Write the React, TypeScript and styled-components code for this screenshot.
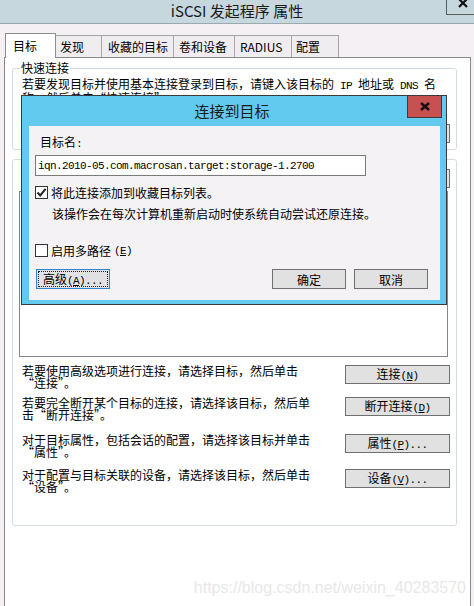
import React from "react";
import styled, { createGlobalStyle } from "styled-components";

const GlobalStyle = createGlobalStyle`
  html, body { margin: 0; padding: 0; }
  body {
    width: 474px;
    height: 606px;
    overflow: hidden;
    background: #f4f0f4;
    font-family: "Noto Sans CJK SC", "Noto Sans", sans-serif;
    font-size: 12px;
    color: #000;
  }
  * { box-sizing: border-box; }
`;

const Window = styled.div`
  position: relative;
  width: 474px;
  height: 606px;
  overflow: hidden;
  background: #f4f0f4;
  display: flex;
  flex-direction: column;
`;

const TitleBar = styled.div`
  flex: none;
  height: 24px;
  background: #c6d7de;
  border-bottom: 1px solid #9aa9b0;
  display: grid;
  grid-template-columns: 1fr auto 1fr;
  align-items: start;
`;

const TitleText = styled.div`
  grid-column: 2;
  font-size: 15px;
  line-height: 22px;
  color: #1a1a1a;
`;

const TitleClose = styled.div`
  grid-column: 3;
  justify-self: end;
  width: 28px;
  height: 15px;
  border-left: 1px solid #5c5c5c;
  border-bottom: 1px solid #5c5c5c;
  padding-left: 11px;
  display: flex;
  align-items: flex-start;
  overflow: hidden;
`;

const Body = styled.div`
  flex: 1;
  display: flex;
  flex-direction: column;
  padding: 9px 3px 0 4px;
`;

const TabStrip = styled.div`
  display: flex;
  align-items: flex-end;
  height: 24px;
  padding-left: 1px;
  position: relative;
  z-index: 2;
`;

const Tab = styled.div<{ $active?: boolean; $w: number; $pl: number }>`
  width: ${(p) => p.$w}px;
  height: ${(p) => (p.$active ? 25 : 22)}px;
  margin-bottom: ${(p) => (p.$active ? -1 : 0)}px;
  padding-left: ${(p) => p.$pl}px;
  display: flex;
  align-items: center;
  white-space: nowrap;
  font-size: 12px;
  line-height: 14px;
  background: ${(p) => (p.$active ? "#ffffff" : "#f0edf0")};
  border-top: 1px solid ${(p) => (p.$active ? "#8c8c8c" : "#a6a6a6")};
  border-right: 1px solid ${(p) => (p.$active ? "#8c8c8c" : "#a6a6a6")};
  border-left: ${(p) => (p.$active ? "1px solid #8c8c8c" : "none")};
`;

const Panel = styled.div`
  flex: 1;
  position: relative;
  z-index: 1;
  background: #ffffff;
  border: 1px solid #898989;
  border-bottom: none;
  padding: 0 13px 0 7px;
  display: flex;
  flex-direction: column;
`;

const GroupBox = styled.div<{ $mt: number; $pt: number; $pb: number }>`
  position: relative;
  margin-top: ${(p) => p.$mt}px;
  padding: ${(p) => p.$pt}px 6px ${(p) => p.$pb}px 6px;
  border: 1px solid #d3dce3;
  border-radius: 3px;
  display: flex;
  flex-direction: column;
`;

const GroupTitle = styled.div`
  position: absolute;
  top: -7px;
  left: 7px;
  padding: 0 1px;
  background: #ffffff;
  line-height: 12px;
  white-space: nowrap;
`;

const HelpText = styled.div`
  padding-left: 3px;
  line-height: 12px;
  white-space: nowrap;
`;

const Ascii = styled.span`
  font-family: "Liberation Mono", "DejaVu Sans Mono", monospace;
  font-size: 11px;
  letter-spacing: -0.6px;
`;

const QuickRow = styled.div`
  margin-top: 20px;
  height: 19px;
  display: flex;
  align-items: center;
  gap: 8px;
  padding-left: 60px;
`;

const FieldBox = styled.div`
  flex: 1;
  height: 19px;
  border: 1px solid #7a7a7a;
  background: #ffffff;
`;

const Button = styled.button`
  flex: none;
  width: 105px;
  height: 19px;
  padding: 0;
  margin: 0;
  border: 1px solid #707070;
  border-radius: 0;
  background: #e1e1e1;
  font-family: "Noto Sans CJK SC", "Noto Sans", sans-serif;
  font-size: 12px;
  line-height: 16px;
  color: #000;
  text-align: center;
  white-space: nowrap;
`;

const RefreshRow = styled.div`
  display: flex;
  justify-content: flex-end;
  height: 19px;
`;

const TargetList = styled.div`
  margin: 3px 2px 0 0;
  height: 166px;
  border: 1px solid #828790;
  background: #ffffff;
`;

const ActionRow = styled.div<{ $mt: number }>`
  margin-top: ${(p) => p.$mt}px;
  display: flex;
  justify-content: space-between;
  align-items: flex-start;
`;

const Dialog = styled.div`
  position: absolute;
  left: 21px;
  top: 95px;
  width: 426px;
  height: 210px;
  z-index: 5;
  border: 1px solid #3a3a3a;
  background: #62c9ef;
  display: flex;
  flex-direction: column;
`;

const DialogTitleBar = styled.div`
  flex: none;
  height: 30px;
  padding-right: 4px;
  display: grid;
  grid-template-columns: 1fr auto 1fr;
  align-items: start;
`;

const DialogTitle = styled.div`
  grid-column: 2;
  font-size: 15px;
  line-height: 30px;
  color: #1a1a1a;
`;

const DialogClose = styled.div`
  grid-column: 3;
  justify-self: end;
  width: 35px;
  height: 22px;
  background: #c75050;
  border: 1px solid #3c3c3c;
  border-top: none;
  display: flex;
  align-items: center;
  justify-content: center;
  padding-bottom: 1px;
`;

const Client = styled.div`
  flex: 1;
  margin: 0 6px 6px 7px;
  background: #f5f2f6;
  padding: 10px 12px 11px 6px;
  display: flex;
  flex-direction: column;
`;

const DialogLabel = styled.div`
  margin-left: 5px;
  line-height: 12px;
  white-space: nowrap;
`;

const NameInput = styled.div`
  margin-top: 5px;
  width: 331px;
  height: 21px;
  border: 1px solid #7a7a7a;
  background: #ffffff;
  padding-left: 2px;
  display: flex;
  align-items: center;
  white-space: nowrap;
  line-height: 12px;
`;

const CheckRow = styled.div<{ $mt: number }>`
  margin-top: ${(p) => p.$mt}px;
  height: 13px;
  display: flex;
  align-items: center;
  gap: 3px;
  line-height: 12px;
  white-space: nowrap;
`;

const CheckBox = styled.div`
  flex: none;
  width: 13px;
  height: 13px;
  border: 1px solid #333333;
  background: #ffffff;
  display: flex;
  align-items: center;
  justify-content: center;
`;

const Desc = styled.div`
  margin-top: 9px;
  padding-left: 17px;
  line-height: 12px;
  white-space: nowrap;
`;

const DialogButtons = styled.div`
  margin-top: 12px;
  padding-left: 1px;
  display: flex;
  gap: 8px;
`;

const DlgButton = styled.button<{ $focus?: boolean; $push?: boolean }>`
  width: 74px;
  height: 20px;
  padding: 0;
  margin: 0;
  margin-left: ${(p) => (p.$push ? "auto" : "0")};
  border: 1px solid ${(p) => (p.$focus ? "#2f86cf" : "#707070")};
  border-radius: 0;
  background: #e1e1e1;
  font-family: "Noto Sans CJK SC", "Noto Sans", sans-serif;
  font-size: 12px;
  line-height: 17px;
  color: #000;
  text-align: center;
  white-space: nowrap;
  outline: ${(p) => (p.$focus ? "1px dotted #222" : "none")};
  outline-offset: -3px;
`;

const Watermark = styled.div`
  position: absolute;
  right: 8px;
  top: 579px;
  z-index: 4;
  font-family: "Liberation Sans", Arial, sans-serif;
  font-size: 16px;
  line-height: 18px;
  color: #e8e8e8;
  white-space: nowrap;
`;

const tabs = [
  { label: "目标", w: 51, pl: 7, active: true },
  { label: "发现", w: 46, pl: 4 },
  { label: "收藏的目标", w: 72, pl: 6 },
  { label: "卷和设备", w: 61, pl: 5 },
  { label: "RADIUS", w: 57, pl: 5 },
  { label: "配置", w: 47, pl: 4 },
];

const XMark = ({ w, h, sw }: { w: number; h: number; sw: number }) => (
  <svg width={w} height={h} viewBox={`0 0 ${w} ${h}`}>
    <path
      d={`M1 1 L${w - 1} ${h - 1} M${w - 1} 1 L1 ${h - 1}`}
      stroke="#111"
      strokeWidth={sw}
      fill="none"
    />
  </svg>
);

export default function App() {
  return (
    <>
      <GlobalStyle />
      <Window>
        <TitleBar>
          <TitleText>iSCSI 发起程序 属性</TitleText>
          <TitleClose>
            <svg width="10" height="9" viewBox="0 0 10 9" style={{ marginTop: -1 }}>
              <path d="M1 0 L9 8 M9 0 L1 8" stroke="#111" strokeWidth="2.2" fill="none" />
            </svg>
          </TitleClose>
        </TitleBar>
        <Body>
          <TabStrip>
            {tabs.map((t) => (
              <Tab key={t.label} $active={t.active} $w={t.w} $pl={t.pl}>
                {t.label}
              </Tab>
            ))}
          </TabStrip>
          <Panel>
            <GroupBox $mt={10} $pt={9} $pb={6}>
              <GroupTitle>快速连接</GroupTitle>
              <HelpText>
                若要发现目标并使用基本连接登录到目标，请键入该目标的<Ascii> IP </Ascii>地址或<Ascii> DNS </Ascii>名
              </HelpText>
              <HelpText>称，然后单击“快速连接”。</HelpText>
              <QuickRow>
                <FieldBox />
                <Button aria-label="快速连接" />
              </QuickRow>
            </GroupBox>
            <GroupBox $mt={9} $pt={9} $pb={32}>
              <RefreshRow>
                <Button aria-label="刷新" />
              </RefreshRow>
              <TargetList />
              <ActionRow $mt={8}>
                <HelpText>
                  若要使用高级选项进行连接，请选择目标，然后单击
                  <br />
                  “连接”。
                </HelpText>
                <Button>
                  连接<Ascii>(<u>N</u>)</Ascii>
                </Button>
              </ActionRow>
              <ActionRow $mt={8}>
                <HelpText>
                  若要完全断开某个目标的连接，请选择该目标，然后单
                  <br />
                  击“断开连接”。
                </HelpText>
                <Button>
                  断开连接<Ascii>(<u>D</u>)</Ascii>
                </Button>
              </ActionRow>
              <ActionRow $mt={13}>
                <HelpText>
                  对于目标属性，包括会话的配置，请选择该目标并单击
                  <br />
                  “属性”。
                </HelpText>
                <Button>
                  属性<Ascii>(<u>P</u>)...</Ascii>
                </Button>
              </ActionRow>
              <ActionRow $mt={11}>
                <HelpText>
                  对于配置与目标关联的设备，请选择该目标，然后单击
                  <br />
                  “设备”。
                </HelpText>
                <Button>
                  设备<Ascii>(<u>V</u>)...</Ascii>
                </Button>
              </ActionRow>
            </GroupBox>
          </Panel>
        </Body>

        <Dialog>
          <DialogTitleBar>
            <DialogTitle>连接到目标</DialogTitle>
            <DialogClose>
              <XMark w={10} h={9} sw={2.4} />
            </DialogClose>
          </DialogTitleBar>
          <Client>
            <DialogLabel>
              目标名<Ascii>:</Ascii>
            </DialogLabel>
            <NameInput>
              <Ascii>iqn.2010-05.com.macrosan.target:storage-1.2700</Ascii>
            </NameInput>
            <CheckRow $mt={10}>
              <CheckBox>
                <svg width="11" height="11" viewBox="0 0 11 11">
                  <path d="M1.5 5.5 L4.2 8.4 L9.6 1.8" stroke="#222" strokeWidth="2" fill="none" />
                </svg>
              </CheckBox>
              将此连接添加到收藏目标列表。
            </CheckRow>
            <Desc>该操作会在每次计算机重新启动时使系统自动尝试还原连接。</Desc>
            <CheckRow $mt={24}>
              <CheckBox />
              启用多路径<Ascii>(<u>E</u>)</Ascii>
            </CheckRow>
            <DialogButtons>
              <DlgButton $focus>
                高级<Ascii>(<u>A</u>)...</Ascii>
              </DlgButton>
              <DlgButton $push>确定</DlgButton>
              <DlgButton>取消</DlgButton>
            </DialogButtons>
          </Client>
        </Dialog>

        <Watermark>https://blog.csdn.net/weixin_40283570</Watermark>
      </Window>
    </>
  );
}
